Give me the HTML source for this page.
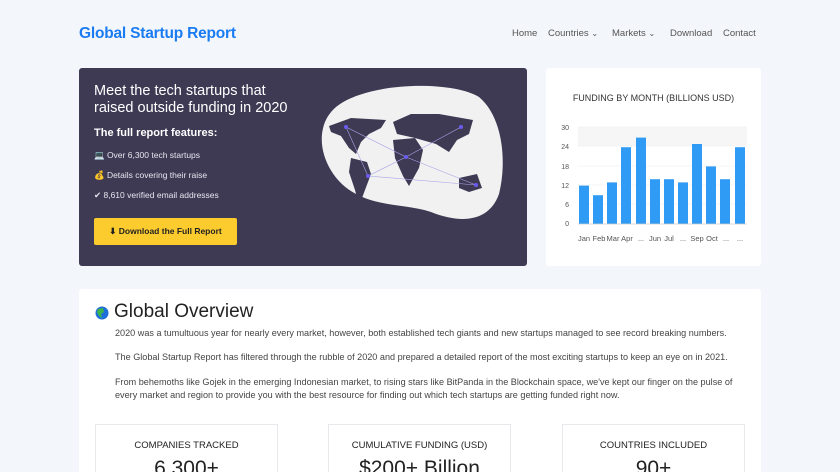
<!DOCTYPE html>
<html><head><meta charset="utf-8"><style>
*{margin:0;padding:0;box-sizing:border-box}
html,body{width:840px;height:472px;overflow:hidden}
body{background:#f3f6fa;font-family:"Liberation Sans",sans-serif;position:relative;color:#333}
.abs{position:absolute}
.logo{left:79px;top:25px;font-size:15.5px;font-weight:bold;color:#1a7cf2;letter-spacing:-0.2px}
.nav{top:28px;font-size:9.5px;color:#555}
.hero{left:79px;top:68px;width:448px;height:198px;background:#3e3a54;border-radius:3px}
.hero h1{position:absolute;left:15px;top:15px;font-size:14.5px;font-weight:normal;color:#fff;line-height:17px}
.hero h2{position:absolute;left:15px;top:59px;font-size:11px;font-weight:bold;color:#fff}
.hero .li{position:absolute;left:15px;font-size:8.5px;color:#e6e6ee}
.btn{position:absolute;left:15px;top:150px;width:143px;height:27px;background:#fccb2e;border-radius:2px;font-size:8.5px;font-weight:bold;color:#222;line-height:27px;text-align:center}
.chart{left:546px;top:68px;width:215px;height:198px;background:#fff;border-radius:3px}
.ov{left:79px;top:289px;width:682px;height:190px;background:#fff;border-radius:3px;overflow:hidden}
.ov h3{position:absolute;left:35px;top:12px;font-size:19px;font-weight:normal;color:#222}
.ov p{position:absolute;left:36px;font-size:9.1px;color:#444;line-height:12.5px;width:625px}
.stat{position:absolute;top:135px;width:183px;height:60px;border:1px solid #e6e8ec;text-align:center}
.stat .t{font-size:9.5px;color:#222;margin-top:15px}
.stat .v{font-size:21px;color:#222;margin-top:6px}
</style></head><body>
<div class="abs logo">Global Startup Report</div>
<div class="abs nav" style="left:512px">Home</div>
<div class="abs nav" style="left:548px">Countries <span style="font-size:8px">&#8964;</span></div>
<div class="abs nav" style="left:612px">Markets <span style="font-size:8px">&#8964;</span></div>
<div class="abs nav" style="left:670px">Download</div>
<div class="abs nav" style="left:723px">Contact</div>

<div class="abs hero">
<h1>Meet the tech startups that<br>raised outside funding in 2020</h1>
<h2>The full report features:</h2>
<div class="li" style="top:82px">💻 Over 6,300 tech startups</div>
<div class="li" style="top:102px">💰 Details covering their raise</div>
<div class="li" style="top:122px">✔ 8,610 verified email addresses</div>
<div class="btn">⬇ Download the Full Report</div>
<svg class="abs" style="left:232px;top:14px" width="196" height="146" viewBox="0 0 196 146">
<path d="M25 25 C55 0 140 -2 168 15 C192 35 196 80 188 112 C178 140 150 142 120 130 C95 122 70 125 45 112 C12 95 -2 48 25 25Z" fill="#f1f1f1"/>
<g fill="#3e3a54">
<path d="M18 44 L40 36 L75 38 L70 46 L58 52 L50 60 L45 72 L38 66 L30 54 L20 50Z"/>
<path d="M40 76 L56 80 L60 92 L54 108 L48 124 L44 108 L38 90Z"/>
<path d="M82 40 L100 32 L128 32 L162 38 L158 52 L146 58 L138 70 L125 62 L104 56 L86 52Z"/>
<path d="M82 58 L104 56 L112 68 L108 86 L98 104 L92 94 L84 76Z"/>
<path d="M148 96 L166 92 L171 106 L158 110 L148 106Z"/>
</g>
<g stroke="#a9a4e8" stroke-width="0.6" fill="none">
<path d="M35 45 L95 75 L57 94 L35 45 M95 75 L150 45 M95 75 L165 103 M57 94 L165 103"/>
</g>
<g fill="#6b5cf0"><circle cx="35" cy="45" r="2"/><circle cx="150" cy="45" r="2"/><circle cx="95" cy="75" r="2"/><circle cx="57" cy="94" r="2"/><circle cx="165" cy="103" r="2"/></g>
</svg>
</div>

<div class="abs chart">
<div style="position:absolute;left:0;width:100%;top:25px;text-align:center;font-size:9px;color:#333">FUNDING BY MONTH (BILLIONS USD)</div>
<svg class="abs" style="left:0;top:0" width="215" height="198">
<rect x="32" y="59" width="169" height="19" fill="#f6f6f6"/>
<g stroke="#eee" stroke-width="0.6"><line x1="32" x2="201" y1="59" y2="59"/><line x1="32" x2="201" y1="78" y2="78"/><line x1="32" x2="201" y1="98" y2="98"/><line x1="32" x2="201" y1="117" y2="117"/><line x1="32" x2="201" y1="136" y2="136"/></g>
<g font-size="7" fill="#555" text-anchor="end" font-family="Liberation Sans"><text x="23" y="62">30</text><text x="23" y="81">24</text><text x="23" y="101">18</text><text x="23" y="120">12</text><text x="23" y="139">6</text><text x="23" y="158">0</text></g>
<g fill="#2f9bf5">
<rect x="33" y="117.6" width="10" height="38.4"/><rect x="47" y="127.2" width="10" height="28.8"/><rect x="61" y="114.4" width="10" height="41.6"/><rect x="75" y="79.2" width="10" height="76.8"/><rect x="90" y="69.6" width="10" height="86.4"/><rect x="104" y="111.2" width="10" height="44.8"/><rect x="118" y="111.2" width="10" height="44.8"/><rect x="132" y="114.4" width="10" height="41.6"/><rect x="146" y="76" width="10" height="80"/><rect x="160" y="98.4" width="10" height="57.6"/><rect x="174" y="111.2" width="10" height="44.8"/><rect x="189" y="79.2" width="10" height="76.8"/>
</g>
<line x1="32" x2="201" y1="156" y2="156" stroke="#ccc" stroke-width="0.8"/>
<g font-size="7.5" fill="#555" font-family="Liberation Sans" text-anchor="middle"><text x="38" y="173">Jan</text><text x="53" y="173">Feb</text><text x="67" y="173">Mar</text><text x="81" y="173">Apr</text><text x="95" y="173">...</text><text x="109" y="173">Jun</text><text x="123" y="173">Jul</text><text x="137" y="173">...</text><text x="151" y="173">Sep</text><text x="166" y="173">Oct</text><text x="180" y="173">...</text><text x="194" y="173">...</text></g>
</svg>
</div>

<div class="abs ov">
<svg class="abs" style="left:16px;top:17px" width="14" height="14"><circle cx="7" cy="7" r="6.5" fill="#1e6fd9"/><path d="M3 3 L8 2 L9 6 L6 8 L7 12 L4 10 L2 6Z" fill="#3bb54a"/></svg>
<h3>Global Overview</h3>
<p style="top:38px">2020 was a tumultuous year for nearly every market, however, both established tech giants and new startups managed to see record breaking numbers.</p>
<p style="top:62px">The Global Startup Report has filtered through the rubble of 2020 and prepared a detailed report of the most exciting startups to keep an eye on in 2021.</p>
<p style="top:87px">From behemoths like Gojek in the emerging Indonesian market, to rising stars like BitPanda in the Blockchain space, we've kept our finger on the pulse of every market and region to provide you with the best resource for finding out which tech startups are getting funded right now.</p>
<div class="stat" style="left:16px"><div class="t">COMPANIES TRACKED</div><div class="v">6,300+</div></div>
<div class="stat" style="left:249px"><div class="t">CUMULATIVE FUNDING (USD)</div><div class="v">$200+ Billion</div></div>
<div class="stat" style="left:483px"><div class="t">COUNTRIES INCLUDED</div><div class="v">90+</div></div>
</div>
</body></html>
